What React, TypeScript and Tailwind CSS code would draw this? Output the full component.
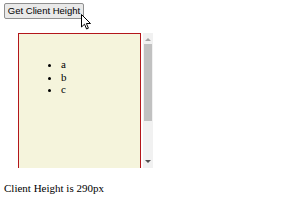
import React from "react";

export default function App() {
  return (
    <div className="relative w-[300px] h-[210px] bg-white overflow-hidden">
      <div className="pl-[4px] pt-[3px]">
        <button className="h-[16px] w-[80px] rounded-[2px] border border-[#8f8f8f] bg-[#e9e9e9] text-[9.5px] leading-none text-black font-['Liberation_Sans',Arial,sans-serif] flex items-center justify-center">
          Get Client Height
        </button>
      </div>
      <div className="flex mt-[14px] ml-[18px] h-[135px]">
        <div className="w-[123px] h-[135px] border-x border-t border-[#b3161b] bg-[#f5f4dc]">
          <ul className="list-disc pl-[42px] pt-[24px] text-[11px] leading-[12.6px] text-black font-['Liberation_Serif','Times_New_Roman',serif]">
            <li>a</li>
            <li>b</li>
            <li>c</li>
          </ul>
        </div>
        <div className="ml-[2px] w-[10px] h-[135px] bg-[#f1f1f1] flex flex-col items-center">
          <div className="h-[11px] flex items-center justify-center">
            <svg width="6" height="4" viewBox="0 0 6 4">
              <path d="M0 4 L3 1 L6 4 Z" fill="#a3a3a3" />
            </svg>
          </div>
          <div className="w-[8px] h-[77px] bg-[#c1c1c1]" />
          <div className="flex-1" />
          <div className="h-[12px] flex items-center justify-center">
            <svg width="6" height="4" viewBox="0 0 6 4">
              <path d="M0 0 L6 0 L3 3 Z" fill="#505050" />
            </svg>
          </div>
        </div>
      </div>
      <p className="ml-[4px] mt-[14px] text-[11px] leading-[13px] text-black font-['Liberation_Serif','Times_New_Roman',serif]">
        Client Height is 290px
      </p>
      <svg
        className="absolute left-[81px] top-[14px]"
        width="11"
        height="17"
        viewBox="0 0 11 17"
      >
        <path
          d="M0.5 0.5 L0.5 13 L3.5 10.2 L5.6 15 L7.4 14.2 L5.4 9.5 L9.5 9.5 Z"
          fill="white"
          stroke="black"
          strokeWidth="1"
          strokeLinejoin="miter"
        />
      </svg>
    </div>
  );
}
